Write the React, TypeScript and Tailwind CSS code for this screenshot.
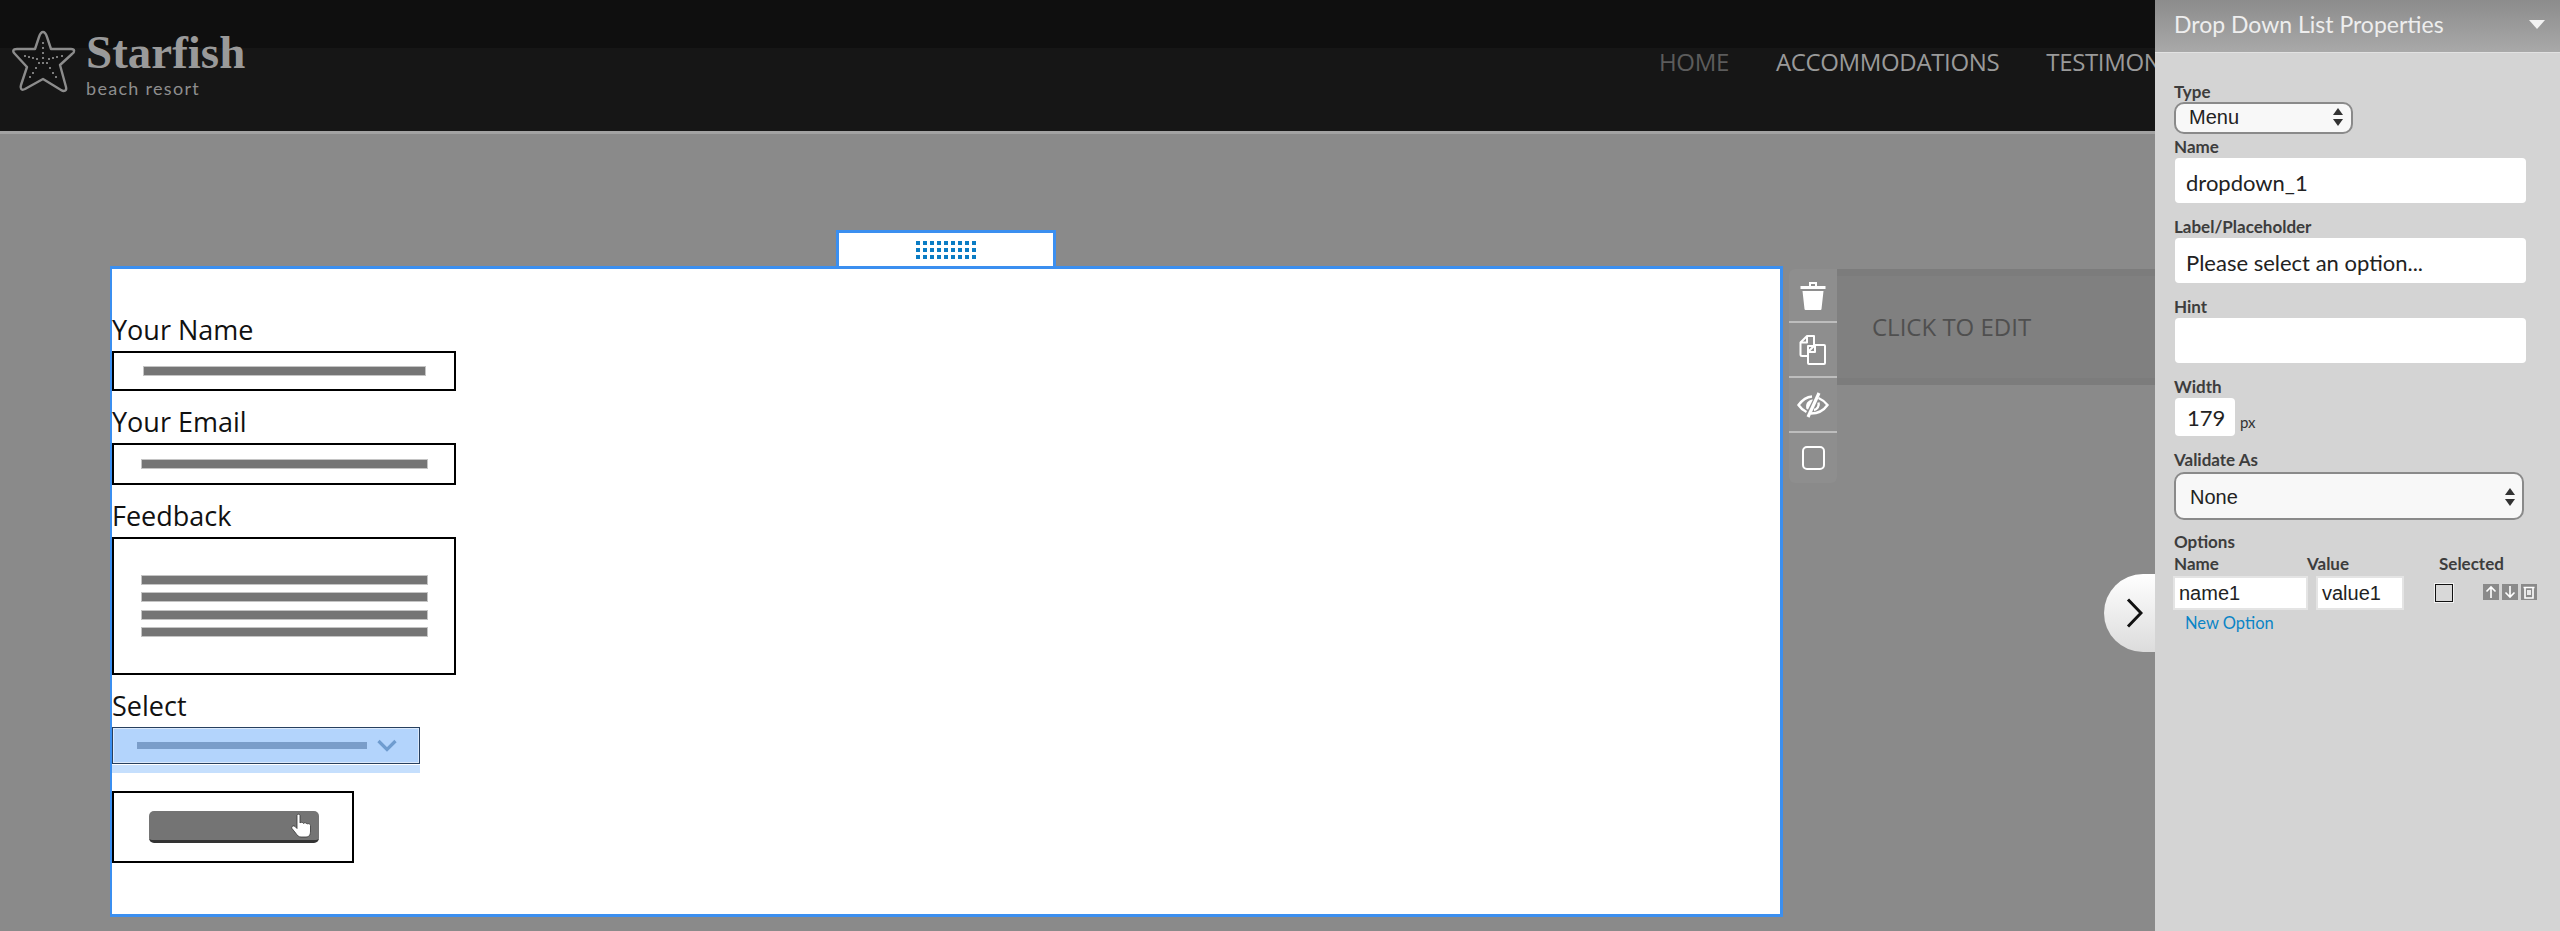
import React from 'react';

function Star() {
  const dots = [
    [43, 44], [43, 49], [43, 54], [43, 59], [29, 58], [33, 59], [37, 60], [49, 60], [53, 59], [57, 58], [62, 57],
    [25, 57], [39, 64], [36, 69], [33, 74], [30, 78], [47, 64], [50, 69], [53, 74], [56, 78], [43, 64],
  ];
  return (
    <svg width="70" height="70" viewBox="8 28 70 70" className="shrink-0">
      <path
        d="M43 33 C45 33 46 35 47 38 L51 50 L71 50 C75 50 75 53 72 55 L60 66 L66 88 C67 92 64 93 61 91 L43 80 L25 90 C21 92 20 89 21 86 L27 68 L15 55 C12 52 13 50 17 50 L35 50 L39 38 C40 35 41 33 43 33 Z"
        fill="#131313"
        stroke="#8c8c8c"
        strokeWidth="2.4"
        strokeLinejoin="round"
      />
      {dots.map(([x, y]) => (
        <circle key={`${x}-${y}`} cx={x} cy={y} r="1" fill="#a0a0a0" />
      ))}
    </svg>
  );
}

function Lines({ count }: { count: number }) {
  return (
    <div className="flex flex-col gap-[9.5px] w-[285px]">
      {Array.from({ length: count }).map((_, i) => (
        <div key={i} className="h-2 bg-[#757575] shadow-[0_0_0_1px_#c4c4c4]"></div>
      ))}
    </div>
  );
}

function FormLabel({ children, className }: { children: React.ReactNode; className: string }) {
  return <div className={`text-[27px] leading-[30px] text-[#111] ${className}`}>{children}</div>;
}

function PropLabel({ children, className = '' }: { children: React.ReactNode; className?: string }) {
  return <div className={`text-[17px] leading-[20px] font-bold text-[#3d3d3d] ${className}`}>{children}</div>;
}

function PropInput({ value, className }: { value: string; className: string }) {
  return (
    <div className={`w-[351px] h-[45px] bg-white rounded-[4px] ml-px flex items-center pl-[11px] pt-[3px] text-[22px] text-[#222] ${className}`}>
      {value}
    </div>
  );
}

function SelectArrows() {
  return (
    <svg width="10" height="18" viewBox="0 0 10 18" fill="#333">
      <path d="M5 0 L10 7 H0 Z" />
      <path d="M5 18 L0 11 H10 Z" />
    </svg>
  );
}

function MiniIcon({ children }: { children: React.ReactNode }) {
  return (
    <div className="w-4 h-4 bg-[#8a8a8a] flex items-center justify-center">
      <svg width="12" height="14" viewBox="0 0 12 14" fill="none" stroke="white" strokeWidth="1.6">
        {children}
      </svg>
    </div>
  );
}

export default function App() {
  return (
    <div className="relative w-[2560px] h-[931px] overflow-hidden bg-[#8a8a8a] font-['Open_Sans',sans-serif]">
      {/* Site header */}
      <header className="h-[134px] border-b-[3px] border-[#a2a2a2] bg-[#161616] relative">
        <div className="h-[48px] bg-[#0f0f0f]"></div>
        <div className="absolute left-[8px] top-[27px] flex gap-[8px]">
          <Star />
          <div className="flex flex-col">
            <span className="font-['Liberation_Serif',serif] font-bold text-[47px] leading-[50px] text-[#9a9a9a]">Starfish</span>
            <span className="font-['Lato',sans-serif] text-[18px] leading-[22px] tracking-[1.3px] text-[#8e8e8e]">beach resort</span>
          </div>
        </div>
        <nav className="absolute left-[1659px] top-[44px] flex gap-[47px] text-[24px] leading-[36px] tracking-[-0.35px] whitespace-nowrap text-[#9a9a9a]">
          <span className="text-[#5c5c5c]">HOME</span>
          <span>ACCOMMODATIONS</span>
          <span>TESTIMONIALS</span>
        </nav>
      </header>

      {/* Page body with the selected form block */}
      <main className="flex items-start pl-[110px] pt-[132px]">
        <section className="relative w-[1673px] h-[651px] bg-white border-l-2 border-r-[3px] border-y-[3px] border-[#3b8ff0] shrink-0 pt-[46px]">
          <div className="absolute left-1/2 -translate-x-1/2 bottom-full w-[220px] h-[39px] bg-white border-[3px] border-[#3b8ff0] grid grid-cols-[repeat(9,4px)] grid-rows-[repeat(3,4px)] gap-x-[3px] gap-y-[3px] justify-center content-center">
            {Array.from({ length: 27 }).map((_, i) => (
              <div key={i} className="bg-[#0a7cc4]"></div>
            ))}
          </div>

          <FormLabel className="mb-[6px]">Your Name</FormLabel>
          <div className="w-[344px] h-[40px] border-2 border-black flex items-center justify-center mb-[16px]">
            <div className="h-2 w-[281px] bg-[#757575] shadow-[0_0_0_1px_#c4c4c4]"></div>
          </div>

          <FormLabel className="mb-[6px]">Your Email</FormLabel>
          <div className="w-[344px] h-[42px] border-2 border-black flex items-center justify-center mb-[16px]">
            <Lines count={1} />
          </div>

          <FormLabel className="mb-[6px]">Feedback</FormLabel>
          <div className="w-[344px] h-[138px] border-2 border-black flex items-center justify-center mb-[16px]">
            <Lines count={4} />
          </div>

          <FormLabel className="mb-[6px]">Select</FormLabel>
          <div className="w-[308px] h-[37px] bg-[#b3d4fc] border border-[#27405f] shadow-[inset_0_0_0_1px_#dbe9fb] flex items-center pl-[24px] gap-[10px]">
            <div className="w-[230px] h-[7px] bg-[#7a9dc9]"></div>
            <svg width="20" height="13" viewBox="0 0 20 13" fill="none" stroke="#6f9ccf" strokeWidth="3.2">
              <path d="M1.5 2 L10 10.5 L18.5 2" />
            </svg>
          </div>
          <div className="w-[308px] h-[8px] mt-px bg-[#c5dffd]"></div>

          <div className="w-[242px] h-[72px] mt-[18px] border-2 border-black flex items-center justify-center pl-[2px]">
            <div className="relative w-[170px] h-[32px] bg-[#747474] rounded-[5px] border-b-[3px] border-[#333]">
              <svg width="24" height="26" viewBox="0 0 24 26" className="absolute right-[5px] top-[2px]" fill="white" stroke="#333" strokeWidth="0.8" strokeLinejoin="round">
                <path d="M7 2.5 C7 0.8 10 0.8 10 2.5 V10 C10.5 9 13 9 13.5 10.5 C14 9.5 16.5 9.5 17 11 C18 10.2 20.5 10.5 20.5 12.5 V18 C20.5 22 19 24 16 24 H11 C8.5 24 7.5 22.5 6 20.5 L2 15.5 C1 13.5 3.5 12 5 13.5 L7 15.5 Z" />
              </svg>
            </div>
          </div>
        </section>

        {/* Block actions */}
        <div className="w-[48px] h-[214px] mt-[3px] ml-[6px] bg-[#8e8e8e] rounded-l-[6px] rounded-br-[6px] shrink-0 flex flex-col divide-y-2 divide-[#bdbdbd]">
          <div className="h-[54px] flex items-center justify-center">
            <svg width="26" height="29" viewBox="0 0 26 29" fill="white">
              <path d="M0.5 5 H9 V1 H17 V5 H25.5 V8 H0.5 Z M11 3 V5 H15 V3 Z" fillRule="evenodd" />
              <path d="M2.5 10 H23.5 L21.5 28 Q21.4 29 20.5 29 H5.5 Q4.6 29 4.5 28 Z" />
            </svg>
          </div>
          <div className="h-[55px] flex items-center justify-center">
            <svg width="28" height="32" viewBox="0 0 28 32" fill="none" stroke="white" strokeWidth="2" strokeLinejoin="round">
              <path d="M8 2 H15 V12 L9 12 V22 H3 Q1.5 22 1.5 20.5 V8.5 Z" />
              <path d="M8 2 V8.5 H1.5" />
              <path d="M16 11 H25 Q26 11 26 12 V29 Q26 30 25 30 H10 Q9 30 9 29 V18 Z" />
              <path d="M16 11 V18 H9" />
            </svg>
          </div>
          <div className="h-[55px] flex items-center justify-center">
            <svg width="32" height="26" viewBox="0 0 32 26" fill="none" stroke="white" strokeWidth="2.4">
              <path d="M15 4.5 C9 5 4.5 9 1.5 13 C3.5 16 6.5 18.5 9.5 20" />
              <path d="M21.5 6 C25 7.5 28 10 30.5 13 C27 18 21 21.5 14 21.5" />
              <path d="M21.5 10.5 C22.5 14 20 17.5 17 18" />
              <path d="M22 1 L11 25" strokeWidth="3.2" />
              <path d="M16 7.5 C10.5 8 8 12 9.5 17 L11 17.5 Z" fill="white" stroke="none" />
            </svg>
          </div>
          <div className="flex-1 flex items-center justify-center">
            <div className="w-[23px] h-[24px] border-2 border-white rounded-[5px]"></div>
          </div>
        </div>

        <div className="flex-1 h-[116px] mt-[3px] bg-[#808080] border-y-[7px] border-[#7c7c7c] flex items-center pl-[35px] text-[24px] text-[#4f4f4f]">
          CLICK TO EDIT
        </div>
      </main>

      {/* Panel toggle */}
      <div className="absolute left-[2104px] top-[574px] w-[51px] h-[78px] rounded-l-[39px] bg-gradient-to-b from-white to-[#dcdcdc] flex items-center justify-end pr-[12px]">
        <svg width="17" height="30" viewBox="0 0 17 30" fill="none" stroke="#111" strokeWidth="3">
          <path d="M2 1.5 L15 15 L2 28.5" />
        </svg>
      </div>

      {/* Properties panel */}
      <aside className="absolute right-0 top-0 w-[405px] h-full bg-[#d4d4d4] font-['Lato',sans-serif]">
        <div className="h-[53px] border-b border-[#e2e2e2] bg-gradient-to-b from-[#8c8c8c] to-[#a9a9a9] flex items-center justify-between pl-[19px] pr-[15px] pb-[3px] text-[23px] text-[#eeeeee]">
          <span>Drop Down List Properties</span>
          <svg width="16" height="9" viewBox="0 0 16 9" fill="#f2f2f2">
            <path d="M0 0 H16 L8 9 Z" />
          </svg>
        </div>
        <div className="pl-[19px] pt-[29px]">
          <PropLabel>Type</PropLabel>
          <div className="w-[179px] h-[32px] bg-[#f8f8f8] border-2 border-[#8a8a8a] rounded-[10px] flex items-center justify-between pl-[13px] pr-[8px] pb-[2px] font-['Liberation_Sans',sans-serif] text-[20px] text-[#222]">
            Menu
            <SelectArrows />
          </div>
          <PropLabel className="mt-[3px]">Name</PropLabel>
          <PropInput value="dropdown_1" className="mt-px" />
          <PropLabel className="mt-[14px]">Label/Placeholder</PropLabel>
          <PropInput value="Please select an option..." className="mt-px" />
          <PropLabel className="mt-[14px]">Hint</PropLabel>
          <PropInput value="" className="mt-px" />
          <PropLabel className="mt-[14px]">Width</PropLabel>
          <div className="flex items-end mt-px">
            <div className="w-[60px] h-[38px] ml-px bg-white rounded-[4px] flex items-center pl-[12px] text-[22px] text-[#222]">179</div>
            <span className="ml-[5px] mb-[6px] text-[15px] leading-[16px] text-[#333]">px</span>
          </div>
          <PropLabel className="mt-[14px]">Validate As</PropLabel>
          <div className="w-[350px] h-[48px] mt-[2px] pt-[1px] bg-[#f8f8f8] border-2 border-[#8a8a8a] rounded-[10px] flex items-center justify-between pl-[14px] pr-[7px] font-['Liberation_Sans',sans-serif] text-[20px] text-[#222]">
            None
            <SelectArrows />
          </div>
          <PropLabel className="mt-[12px]">Options</PropLabel>
          <div className="grid grid-cols-[133px_132px_auto] mt-[2px]">
            <PropLabel>Name</PropLabel>
            <PropLabel>Value</PropLabel>
            <PropLabel>Selected</PropLabel>
          </div>
          <div className="flex items-center mt-[2px] -ml-px font-['Liberation_Sans',sans-serif] text-[20px] text-[#222]">
            <div className="w-[135px] h-[34px] bg-white border-2 border-[#e4e4e4] flex items-center pl-[4px]">name1</div>
            <div className="w-[88px] h-[34px] ml-[8px] bg-white border-2 border-[#e4e4e4] flex items-center pl-[4px]">value1</div>
            <div className="w-[18px] h-[18px] ml-[31px] bg-[#d8d8d8] border-[1.5px] border-[#111] shadow-[0_0_0_1px_#f2f2f2]"></div>
            <div className="ml-[30px] flex gap-[3px] -mt-[2px]">
              <MiniIcon>
                <path d="M6 13 V2 M1.5 6.5 L6 2 L10.5 6.5" />
              </MiniIcon>
              <MiniIcon>
                <path d="M6 1 V12 M1.5 7.5 L6 12 L10.5 7.5" />
              </MiniIcon>
              <MiniIcon>
                <path d="M0.5 2.5 H11.5 M2 2.5 V13 H10 V2.5 M5 5 V10 M7 5 V10" />
              </MiniIcon>
            </div>
          </div>
          <div className="ml-[11px] mt-[3px] text-[16.5px] leading-[20px] text-[#0a84c6]">New Option</div>
        </div>
      </aside>
    </div>
  );
}
